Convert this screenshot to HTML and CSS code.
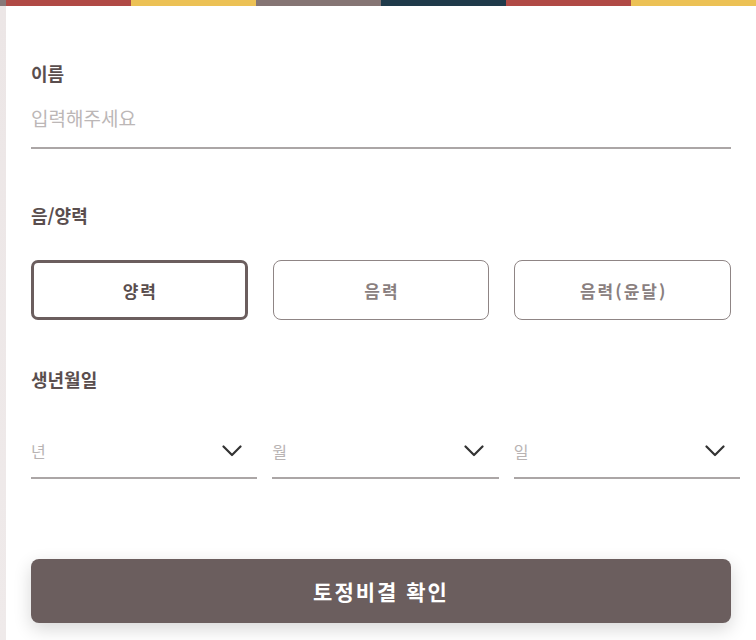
FILE: index.html
```html
<!DOCTYPE html>
<html lang="ko">
<head>
<meta charset="utf-8">
<title>토정비결</title>
<link rel="stylesheet" href="styles.css">
</head>
<body>
<div class="page">
  <div class="side"></div>
  <div class="main">
    <div class="stripe">
      <span class="s-red"></span><span class="s-yellow"></span><span class="s-gray"></span><span class="s-navy"></span><span class="s-red"></span><span class="s-yellow"></span>
    </div>
    <form class="form">
      <label class="label label-name" for="name">이름</label>
      <input class="text-input" id="name" type="text" placeholder="입력해주세요">

      <div class="label label-cal">음/양력</div>
      <div class="cal-row">
        <button type="button" class="cal-btn active">양력</button>
        <button type="button" class="cal-btn">음력</button>
        <button type="button" class="cal-btn">음력(윤달)</button>
      </div>

      <div class="label label-birth">생년월일</div>
      <div class="date-row">
        <div class="select"><span class="select-text">년</span><svg class="chev" width="20" height="12" viewBox="0 0 20 12"><path d="M1.5 1.5 L10 10 L18.5 1.5" fill="none" stroke="#333" stroke-width="2.2" stroke-linecap="round" stroke-linejoin="round"/></svg></div>
        <div class="select"><span class="select-text">월</span><svg class="chev" width="20" height="12" viewBox="0 0 20 12"><path d="M1.5 1.5 L10 10 L18.5 1.5" fill="none" stroke="#333" stroke-width="2.2" stroke-linecap="round" stroke-linejoin="round"/></svg></div>
        <div class="select"><span class="select-text">일</span><svg class="chev" width="20" height="12" viewBox="0 0 20 12"><path d="M1.5 1.5 L10 10 L18.5 1.5" fill="none" stroke="#333" stroke-width="2.2" stroke-linecap="round" stroke-linejoin="round"/></svg></div>
      </div>

      <button type="button" class="submit">토정비결 확인</button>
    </form>
  </div>
</div>
</body>
</html>
```

FILE: styles.css
```css
html, body {
  margin: 0;
  padding: 0;
  background: #ffffff;
  font-family: "Noto Sans CJK KR", "Noto Sans", sans-serif;
}

.page {
  display: flex;
  min-height: 640px;
  overflow: hidden;
}

.side {
  width: 6px;
  flex: 0 0 6px;
  background: linear-gradient(to bottom, #877878 0, #877878 6px, #ece6e6 6px, #efeaea 100%);
}

.main {
  flex: 1;
  min-width: 0;
}

.stripe {
  display: flex;
  height: 6px;
}
.stripe span { flex: 1; }
.s-red { background: #b04a45; }
.s-yellow { background: #ecc155; }
.s-gray { background: #857574; }
.s-navy { background: #1f3a4a; }

.form {
  display: flex;
  flex-direction: column;
  padding: 0 25px;
}

.label {
  display: block;
  font-size: 18px;
  line-height: 24px;
  font-weight: 700;
  color: #5a4e4e;
}
.label-name { margin-top: 55px; }
.label-cal { margin-top: 54px; }
.label-birth { margin-top: 47px; }

.text-input {
  display: block;
  margin-top: 9px;
  width: 100%;
  box-sizing: border-box;
  border: none;
  border-bottom: 2px solid #aba6a6;
  padding: 8px 0 15px;
  height: 55px;
  font-family: inherit;
  font-size: 19px;
  line-height: 24px;
  color: #333;
  outline: none;
  background: transparent;
}
.text-input::placeholder { color: #bcb7b7; }

.cal-row {
  display: grid;
  grid-template-columns: repeat(3, minmax(0, 1fr));
  column-gap: 25px;
  margin-top: 33px;
}

.cal-btn {
  margin: 0;
  width: 100%;
  height: 60px;
  box-sizing: border-box;
  background: #fff;
  border: 1px solid #8f8585;
  border-radius: 8px;
  font-family: inherit;
  font-size: 17px;
  font-weight: 700;
  letter-spacing: 2px;
  color: #8a7f7f;
  padding: 0 0 0 2px;
}
.cal-btn.active {
  border: 3px solid #6b5e5e;
  border-radius: 7px;
  color: #5a4e4e;
}

.date-row {
  display: flex;
  gap: 15px;
  margin-top: 36px;
  margin-right: -9px;
}

.select {
  flex: 1 1 0;
  min-width: 0;
  display: flex;
  align-items: center;
  justify-content: space-between;
  padding: 12px 15px 14px 0;
  border-bottom: 2px solid #aba6a6;
}
.select-text {
  font-size: 16px;
  line-height: 24px;
  color: #b8b3b3;
}
.chev { display: block; }

.submit {
  margin-top: 80px;
  height: 64px;
  border: none;
  border-radius: 8px;
  background: #6b5e5e;
  color: #ffffff;
  font-family: inherit;
  font-size: 21px;
  font-weight: 700;
  letter-spacing: 2px;
  box-shadow: 0 6px 18px rgba(0, 0, 0, 0.16);
}
```
